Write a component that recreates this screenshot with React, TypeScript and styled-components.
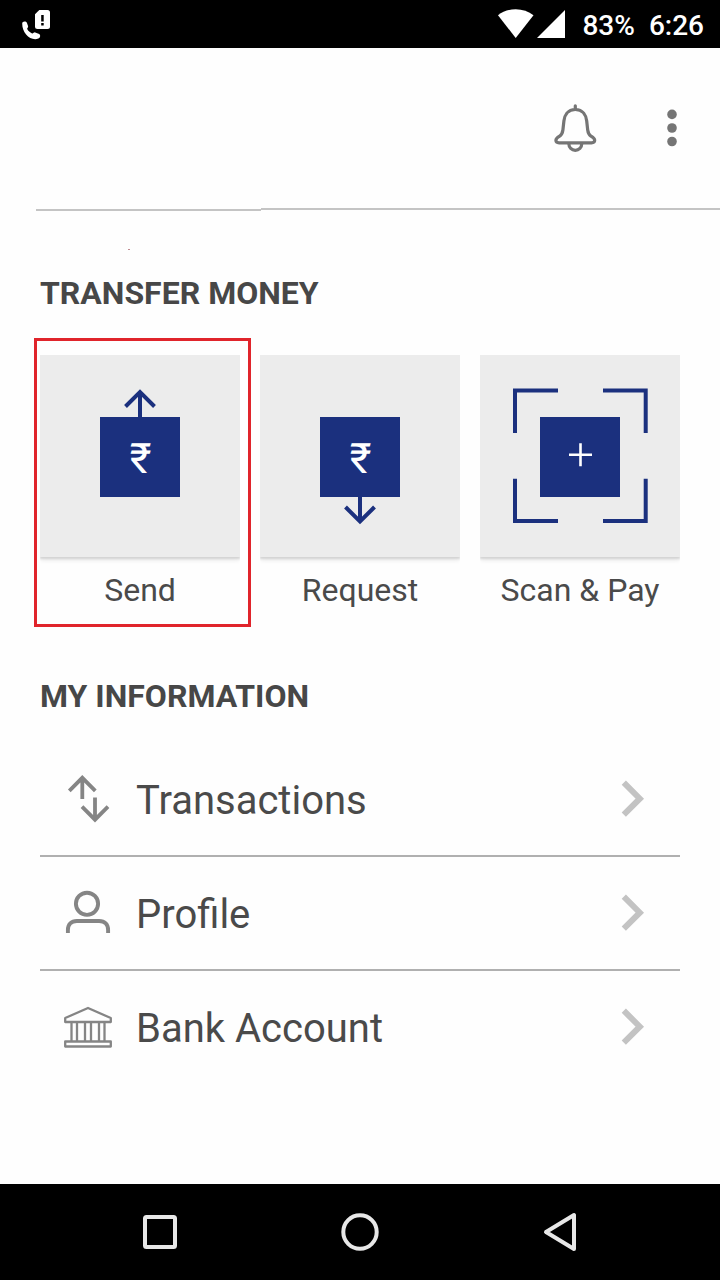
import React from 'react';
import styled, { createGlobalStyle } from 'styled-components';

const NAVY = '#1b307e';

const GlobalStyle = createGlobalStyle`
  * { box-sizing: border-box; }
  body { margin: 0; background: #fefefe; font-family: Roboto, "Liberation Sans", sans-serif; }
  svg { display: block; flex: none; }
`;

const Screen = styled.div`
  width: 720px;
  height: 1280px;
  display: flex;
  flex-direction: column;
  background: #fefefe;
  color: #4a4a4a;
  overflow: hidden;
`;

const StatusBar = styled.div`
  height: 48px;
  flex: none;
  display: flex;
  align-items: center;
  background: #000;
  color: #fff;
  padding: 0 16px 0 20px;
`;

const StatusRight = styled.div`
  display: flex;
  align-items: center;
  margin-left: auto;
`;

const StatusText = styled.span<{ $gap: number }>`
  font-size: 28px;
  line-height: 46px;
  font-weight: 500;
  padding-top: 4px;
  margin-left: ${(p) => p.$gap}px;
`;

const Header = styled.header`
  height: 160px;
  flex: none;
  display: flex;
  align-items: center;
  justify-content: flex-end;
  gap: 64px;
  padding-right: 38px;
`;

const HeaderRule = styled.div`
  height: 3px;
  flex: none;
  display: flex;
  padding-left: 36px;
`;

const RuleSegment = styled.div<{ $width?: number; $drop?: number }>`
  height: 2px;
  ${(p) => (p.$width ? `width: ${p.$width}px;` : 'flex: 1;')}
  margin-top: ${(p) => p.$drop ?? 0}px;
  background: #c4c4c4;
`;

const Speck = styled.div`
  width: 2px;
  height: 1px;
  flex: none;
  margin: 38px 0 0 128px;
  background: #c08a90;
`;

const Content = styled.main`
  flex: 1;
  padding: 24px 40px 0;
`;

const SectionTitle = styled.h2`
  margin: 0;
  font-size: 32px;
  line-height: 38px;
  font-weight: 700;
  color: #474747;
`;

const Tiles = styled.div`
  display: flex;
  gap: 20px;
  margin-top: 43px;
`;

const TileCard = styled.button`
  position: relative;
  width: 200px;
  padding: 0;
  border: 0;
  background: none;
  font: inherit;
  color: inherit;
`;

const TileFace = styled.div`
  height: 202px;
  background: #ececec;
  box-shadow: 0 2px 2px #d4d4d4, 0 5px 4px -1px #efefef;
  clip-path: inset(-2px 0 -10px 0);
`;

const TileLabel = styled.div`
  margin-top: 13px;
  font-size: 32px;
  line-height: 40px;
  text-align: center;
`;

const Highlight = styled.div`
  position: absolute;
  left: -6px;
  top: -17px;
  width: 217px;
  height: 289px;
  border: 3px solid #e0242b;
`;

const InfoTitle = styled(SectionTitle)`
  margin-top: 67px;
`;

const Row = styled.div<{ $last?: boolean }>`
  height: 114px;
  display: flex;
  align-items: center;
  padding: 0 35px 0 24px;
  border-bottom: 2px solid ${(p) => (p.$last ? 'transparent' : '#b0b0b0')};
`;

const Rows = styled.div`
  margin-top: 28px;
`;

const RowLabel = styled.span`
  flex: 1;
  margin-left: 24px;
  padding-top: 3px;
  font-size: 40px;
  line-height: 48px;
`;

const NavBar = styled.nav`
  height: 96px;
  flex: none;
  display: flex;
  align-items: center;
  justify-content: space-around;
  padding: 0 60px;
  background: #000;
`;

const Rupee = () => (
  <text x="100.500" y="118" textAnchor="middle" fontSize="42" fontFamily="Roboto, sans-serif" fill="#fff">₹</text>
);

const SendArt = () => (
  <svg width="200" height="202" viewBox="0 0 200 202" fill="none" stroke={NAVY} strokeWidth="4">
    <path d="M100 64V37M85.500 51.500 100 37l14.500 14.500" />
    <rect x="60" y="62" width="80" height="80" fill={NAVY} stroke="none" />
    <g stroke="none"><Rupee /></g>
  </svg>
);

const RequestArt = () => (
  <svg width="200" height="202" viewBox="0 0 200 202" fill="none" stroke={NAVY} strokeWidth="4">
    <path d="M100 140V166.500M85.500 152 100 166.500l14.500-14.500" />
    <rect x="60" y="62" width="80" height="80" fill={NAVY} stroke="none" />
    <g stroke="none"><Rupee /></g>
  </svg>
);

const ScanArt = () => (
  <svg width="200" height="202" viewBox="0 0 200 202" fill="none" stroke={NAVY} strokeWidth="4">
    <path d="M35 78V35.500H78M123 35.500h42.700V78M165.700 123.700V166H123M78 166H35v-42.300" />
    <rect x="60" y="62" width="80" height="80" fill={NAVY} stroke="none" />
    <path d="M89 99.700h23M100.500 88.200v23" stroke="#fff" strokeWidth="2.600" />
  </svg>
);

const TransactionsIcon = () => (
  <svg width="48" height="48" viewBox="0 0 48 48" fill="none" stroke="#858585" strokeWidth="3.800">
    <path d="M18.300 24V3M5.300 15.800 18.300 2.800l13 13M31 22.500v22M18 31.700l13 13 13-13" />
  </svg>
);

const ProfileIcon = () => (
  <svg width="48" height="48" viewBox="0 0 48 48" fill="none" stroke="#858585" strokeWidth="3.900">
    <circle cx="23" cy="14.800" r="11.100" />
    <path d="M3.900 44v-3c0-5.500 3.300-9 9-9h22.200c5.700 0 9 3.500 9 9v3" />
  </svg>
);

const BankIcon = () => (
  <svg width="48" height="48" viewBox="0 0 48 48" fill="none" stroke="#858585" strokeWidth="2.300" strokeLinejoin="round">
    <path d="M1.200 15 24 5l22.800 10v4H1.200zM1.200 38.500h45.600V43.500H1.200zM7.500 19v19M13 19v19M21 19v19M27 19v19M35 19v19M40.500 19v19" />
  </svg>
);

const Chevron = () => (
  <svg width="25" height="40" viewBox="0 0 25 40" fill="none" stroke="#c3c3c3" strokeWidth="6">
    <path d="M3.800 3.700 19.800 19.700l-16 16" />
  </svg>
);

const BellIcon = () => (
  <svg width="46" height="48" viewBox="0 0 46 48" fill="none" stroke="#757575" strokeWidth="3.200" strokeLinecap="round">
    <path d="M23.300 1.800V5M23.300 5.500C15.500 5.500 12.500 11.500 11.900 17l-1 9c-.4 3.200-1.200 4.700-3.300 6.200C5 33.800 3.900 34.700 3.900 36.300c0 1.700 1.100 2.500 3.200 2.500h32.400c2.100 0 3.200-.8 3.200-2.500 0-1.600-1.100-2.500-3.700-4.100-2.100-1.500-2.900-3-3.300-6.200l-1-9C34.100 11.500 31.100 5.500 23.300 5.500z" />
    <path d="M16.800 39.500a6.500 6.800 0 0 0 13 0" />
  </svg>
);

const MoreIcon = () => (
  <svg width="20" height="48" viewBox="0 0 20 48" fill="#757575">
    <circle cx="10" cy="10.400" r="4.800" />
    <circle cx="10" cy="24" r="4.800" />
    <circle cx="10" cy="37.500" r="4.800" />
  </svg>
);

const CallSimIcon = () => (
  <svg width="32" height="48" viewBox="0 0 32 48">
    <path d="M19.300 10H27.500Q30 10 30 12.500V26.500Q30 29 27.500 29H17.500Q15 29 15 26.500V14.300z" fill="#fff" />
    <path d="M21.200 15h2.500v6.500h-2.500zM21.200 23h2.500v2.500h-2.500z" fill="#000" />
    <path d="M2.200 23.500C2 21.200 6 20.800 6.900 22.700l1.200 3.600c.3 1.300-1.100 1.800-.9 2.800 1 2 2.700 3.500 4.900 4.400 1.100.3 1.800-1.400 3.100-1.100l4 1.600c1.600 1 1.200 3.800-.8 4.600C10.500 41.300 2.200 33.500 2.200 23.500z" fill="#fff" />
  </svg>
);

const WifiSignalIcon = () => (
  <svg width="70" height="48" viewBox="0 0 70 48" fill="#fff">
    <path d="M3 15.300C12.500 7.300 29 7.300 38.500 15.300L20.700 38z" />
    <path d="M42 38 70 10v28z" />
  </svg>
);

const tiles = [
  { label: 'Send', Art: SendArt, active: true },
  { label: 'Request', Art: RequestArt, active: false },
  { label: 'Scan & Pay', Art: ScanArt, active: false },
];

const rows = [
  { label: 'Transactions', Icon: TransactionsIcon },
  { label: 'Profile', Icon: ProfileIcon },
  { label: 'Bank Account', Icon: BankIcon },
];

export default function App() {
  return (
    <Screen>
      <GlobalStyle />
      <StatusBar>
        <CallSimIcon />
        <StatusRight>
          <WifiSignalIcon />
          <StatusText $gap={17}>83%</StatusText>
          <StatusText $gap={14}>6:26</StatusText>
        </StatusRight>
      </StatusBar>
      <Header>
        <BellIcon />
        <MoreIcon />
      </Header>
      <HeaderRule>
        <RuleSegment $width={225} $drop={1} />
        <RuleSegment />
      </HeaderRule>
      <Speck />
      <Content>
        <SectionTitle>TRANSFER MONEY</SectionTitle>
        <Tiles>
          {tiles.map(({ label, Art, active }) => (
            <TileCard key={label}>
              <TileFace><Art /></TileFace>
              <TileLabel>{label}</TileLabel>
              {active && <Highlight />}
            </TileCard>
          ))}
        </Tiles>
        <InfoTitle>MY INFORMATION</InfoTitle>
        <Rows>
          {rows.map(({ label, Icon }, i) => (
            <Row key={label} $last={i === rows.length - 1}>
              <Icon />
              <RowLabel>{label}</RowLabel>
              <Chevron />
            </Row>
          ))}
        </Rows>
      </Content>
      <NavBar>
        <svg width="40" height="40" viewBox="0 0 40 40" fill="none" stroke="#e8e8e8" strokeWidth="4">
          <rect x="5" y="5" width="30" height="30" rx="1.500" />
        </svg>
        <svg width="40" height="40" viewBox="0 0 40 40" fill="none" stroke="#e8e8e8" strokeWidth="4">
          <circle cx="20" cy="20" r="16.700" />
        </svg>
        <svg width="40" height="40" viewBox="0 0 40 40" fill="none" stroke="#e8e8e8" strokeWidth="4" strokeLinejoin="round">
          <path d="M6 20 34 3v34z" />
        </svg>
      </NavBar>
    </Screen>
  );
}
